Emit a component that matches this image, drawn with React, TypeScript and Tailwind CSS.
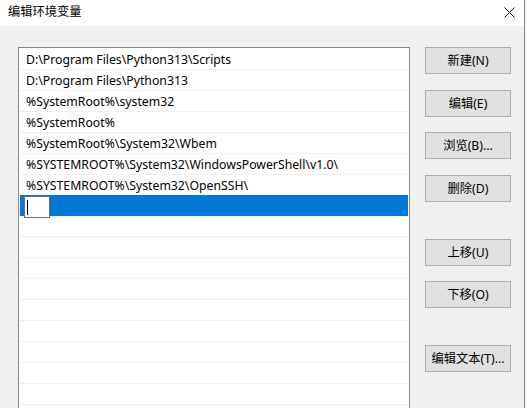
const FONT = { fontFamily: '"Segoe UI", "Noto Sans", "Noto Sans CJK SC", sans-serif' };

const PATHS = [
  "D:\\Program Files\\Python313\\Scripts",
  "D:\\Program Files\\Python313",
  "%SystemRoot%\\system32",
  "%SystemRoot%",
  "%SystemRoot%\\System32\\Wbem",
  "%SYSTEMROOT%\\System32\\WindowsPowerShell\\v1.0\\",
  "%SYSTEMROOT%\\System32\\OpenSSH\\",
];

// label + top margin so the button stack keeps its gaps
const BUTTONS = [
  { label: "新建(N)", mt: "mt-[21px]" },
  { label: "编辑(E)", mt: "mt-[16px]" },
  { label: "浏览(B)...", mt: "mt-[15px]" },
  { label: "删除(D)", mt: "mt-[16px]" },
  { label: "上移(U)", mt: "mt-[37px]" },
  { label: "下移(O)", mt: "mt-[15px]" },
  { label: "编辑文本(T)...", mt: "mt-[37px]" },
];

function CloseIcon() {
  return (
    <svg width="11" height="11" viewBox="0 0 11 11" className="block">
      <path d="M0.5 0.5L10.5 10.5M10.5 0.5L0.5 10.5" stroke="#111" strokeWidth="1" />
    </svg>
  );
}

export default function App() {
  const emptyRows = Array.from({ length: 10 });

  return (
    <div className="w-[527px] h-[408px] overflow-hidden flex bg-white text-[12px] text-black" style={FONT}>
      <div className="w-[525px] h-full flex flex-col border-r border-[#8a8a8a]">
        <div className="h-[26px] shrink-0 bg-white flex items-center justify-between pl-[8px] pr-[9px] pb-[2px]">
          <span className="text-[12.25px] leading-none">编辑环境变量</span>
          <CloseIcon />
        </div>

        <div className="flex-1 bg-[#f0f0f0] flex pl-[18px]">
          <div className="mt-[21px] w-[392px] h-[400px] shrink-0 border border-[#828790] bg-white p-px">
            {PATHS.map((p) => (
              <div
                key={p}
                className="h-[21px] border-b border-[#f0f0f0] pl-[6px] pt-[2px] flex items-center whitespace-nowrap text-[12.25px]"
              >
                {p}
              </div>
            ))}
            <div className="h-[21px] bg-[#0078d7] -mt-px border-t border-[#0078d7] pl-[4px] flex items-start">
              <div className="w-[26px] h-[22px] bg-white border border-[#6e6e6e] flex items-center pl-[2px]">
                <div className="w-px h-[15px] bg-black" />
              </div>
            </div>
            {emptyRows.map((_, i) => (
              <div key={i} className="h-[21px] border-b border-[#f0f0f0]" />
            ))}
          </div>

          <div className="ml-[15px] flex flex-col">
            {BUTTONS.map((b) => (
              <button
                key={b.label}
                className={`${b.mt} w-[86px] h-[27px] bg-[#e1e1e1] border border-[#adadad] text-[12.25px] leading-none pt-px flex items-center justify-center`}
              >
                {b.label}
              </button>
            ))}
          </div>
        </div>
      </div>
      <div className="flex-1 bg-[#f0f0f0]" />
    </div>
  );
}
